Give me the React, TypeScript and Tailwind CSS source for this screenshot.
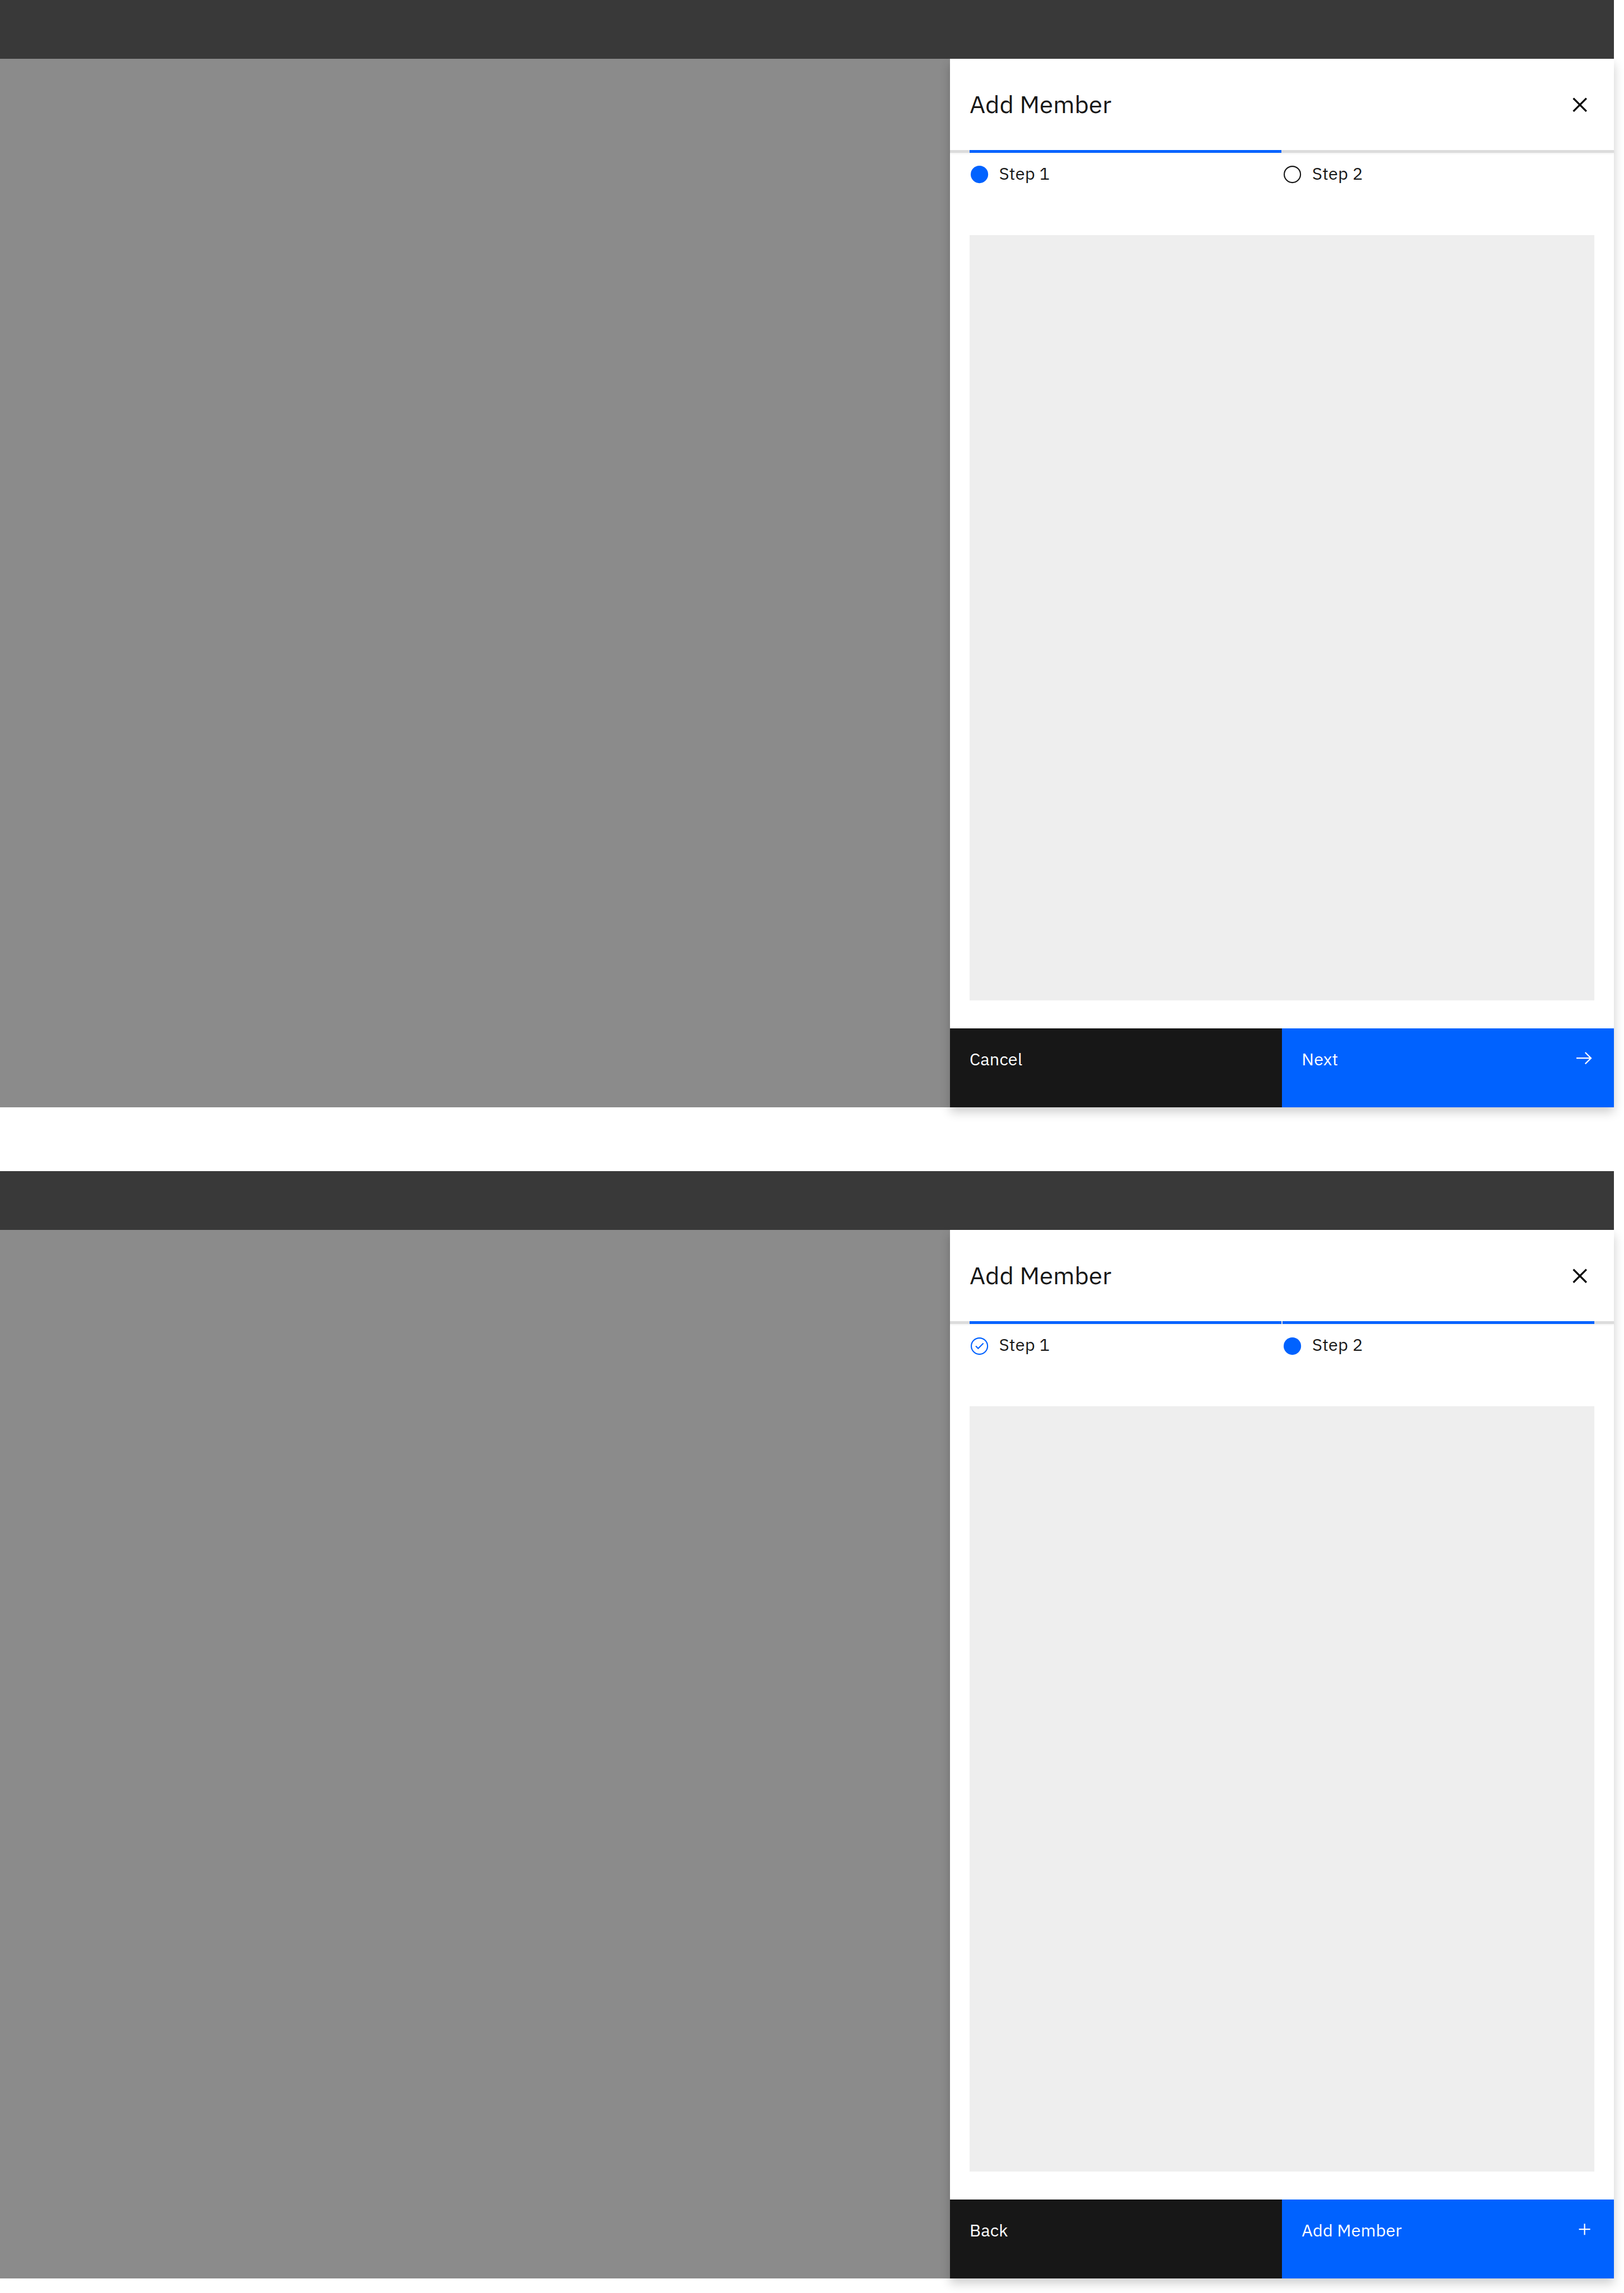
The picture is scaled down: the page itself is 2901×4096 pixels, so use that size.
import React from "react";

type StepState = "current" | "incomplete" | "complete";

const BLUE = "#0062ff";

function StepIcon({ state }: { state: StepState }) {
  return (
    <svg className="mt-[21.9px] size-[35.2px] shrink-0" viewBox="0 0 40 40" fill="none">
      {state === "current" && <circle cx="20" cy="20" r="17.7" fill={BLUE} />}
      {state === "incomplete" && <circle cx="20" cy="20" r="16.5" stroke="#171717" strokeWidth="2.4" />}
      {state === "complete" && (
        <>
          <circle cx="20" cy="20" r="16.5" stroke={BLUE} strokeWidth="2.4" />
          <path d="M12.5 19.8l4.9 4.9 10.6-10.4" stroke={BLUE} strokeWidth="2.4" />
        </>
      )}
    </svg>
  );
}

function CloseIcon() {
  return (
    <svg className="h-[26.4px] w-[26.4px]" viewBox="0 0 30 30" fill="none">
      <path d="M1.8 1.8l26.4 26.4M28.2 1.8L1.8 28.2" stroke="#000" strokeWidth="3.8" />
    </svg>
  );
}

function ArrowIcon() {
  return (
    <svg className="h-[26.4px] w-[35.2px]" viewBox="0 0 40 30" fill="none">
      <path d="M3.4 15h29.6M21.3 3.4L33 15 21.3 26.6" stroke="#fff" strokeWidth="2.6" />
    </svg>
  );
}

function PlusIcon() {
  return (
    <svg className="h-[26.4px] w-[35.2px]" viewBox="0 0 40 30" fill="none">
      <path d="M8.6 15h22.8M20 3.6v22.8" stroke="#fff" strokeWidth="2.5" />
    </svg>
  );
}

function Step({ label, state }: { label: string; state: StepState }) {
  return (
    <div className="flex w-[559.3px] items-start gap-[17.6px]">
      <StepIcon state={state} />
      <span className="mt-[16.2px] text-[30.77px] leading-[40px] tracking-[0.3px] text-[#171717]">{label}</span>
    </div>
  );
}

interface ScreenProps {
  steps: [StepState, StepState];
  secondary: string;
  primary: string;
  icon: React.ReactNode;
}

function Screen({ steps, secondary, primary, icon }: ScreenProps) {
  return (
    <section className="w-[2883.4px]">
      <div className="relative z-10 h-[105.4px] bg-[#393939]" />
      <div className="flex h-[1872.4px] justify-end bg-[#8b8b8b]">
        <aside className="flex w-[1186.7px] flex-col bg-white shadow-[0_8.8px_17.6px_rgba(0,0,0,0.2)]">
          <header className="flex h-[162.7px] items-start justify-between pr-[48.2px] pl-[35.2px]">
            <h1 className="pt-[51.8px] text-[43.95px] leading-[57px] font-normal text-[#171717]">Add Member</h1>
            <div className="pt-[68.3px]">
              <CloseIcon />
            </div>
          </header>
          <div className="h-[151.7px]">
            <div className="flex h-[4.5px] gap-[1.2px] bg-[#dcdcdc] px-[35.2px] shadow-[0_2px_3px_rgba(0,0,0,0.05)]">
              {steps.map((state, i) => (
                <div
                  key={i}
                  className={state === "incomplete" ? "w-[558px]" : "w-[558px] bg-[#0062ff]"}
                />
              ))}
            </div>
            <div className="flex pl-[35.2px]">
              <Step label="Step 1" state={steps[0]} />
              <Step label="Step 2" state={steps[1]} />
            </div>
          </div>
          <div className="mx-[35.2px] h-[1366.8px] bg-[#eeeeee]" />
          <footer className="mt-auto grid h-[140.6px] grid-cols-2 text-[30.77px] leading-[40px] tracking-[0.16px] text-white">
            <div className="bg-[#171717] pt-[33.5px] pl-[35.2px]">{secondary}</div>
            <div className="flex items-start justify-between bg-[#0062ff] px-[35.2px]">
              <span className="pt-[33.5px]">{primary}</span>
              <span className="pt-[39.5px]">{icon}</span>
            </div>
          </footer>
        </aside>
      </div>
    </section>
  );
}

export default function App() {
  return (
    <main className="flex h-[4096px] w-[2901px] flex-col gap-[114.3px] overflow-hidden bg-white font-['IBM_Plex_Sans',Roboto,sans-serif]">
      <Screen steps={["current", "incomplete"]} secondary="Cancel" primary="Next" icon={<ArrowIcon />} />
      <Screen steps={["complete", "current"]} secondary="Back" primary="Add Member" icon={<PlusIcon />} />
    </main>
  );
}
